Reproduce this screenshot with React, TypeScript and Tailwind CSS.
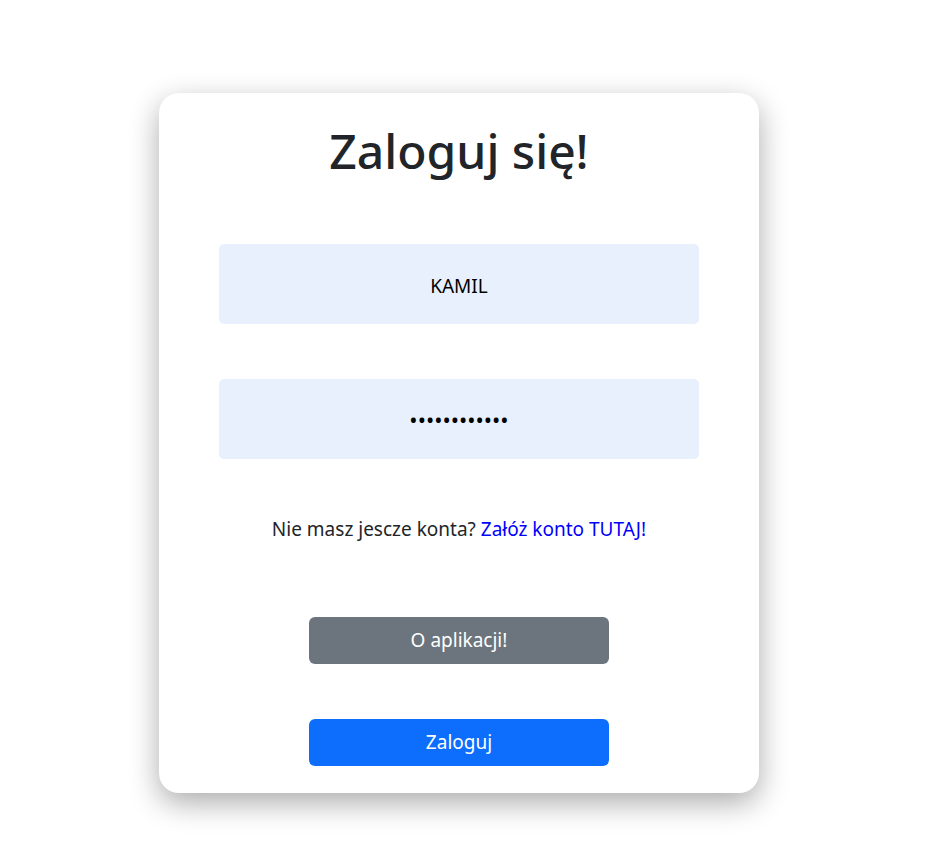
import React from "react";

export default function App() {
  return (
    <div
      className="min-h-[856px] bg-white flex justify-center pr-[16px] pt-[93px]"
      style={{ fontFamily: '"Noto Sans", "Open Sans", sans-serif' }}
    >
      <div className="w-[600px] h-[700px] bg-white rounded-[20px] shadow-[0_10px_30px_rgba(0,0,0,0.33)] flex flex-col items-center">
        <h1 className="mt-[28px] text-[48px] leading-[60px] font-medium text-[#212529]">
          Zaloguj się!
        </h1>
        <div className="mt-[63px] w-[480px] h-[80px] pt-[4px] bg-[#e8f0fe] rounded-[5px] flex items-center justify-center text-[19px] text-black">
          KAMIL
        </div>
        <div className="mt-[55px] w-[480px] h-[80px] bg-[#e8f0fe] rounded-[5px] flex items-center justify-center text-[22px] text-black">
          ••••••••••••
        </div>
        <p className="mt-[56px] text-[19px] leading-[28px] text-[#212529]">
          Nie masz jescze konta? <span className="text-[#0000ff]">Załóż konto TUTAJ!</span>
        </p>
        <button className="mt-[74px] w-[300px] h-[47px] bg-[#6c757d] rounded-[6px] text-white text-[19px]">
          O aplikacji!
        </button>
        <button className="mt-[55px] w-[300px] h-[47px] bg-[#0d6efd] rounded-[6px] text-white text-[19px]">
          Zaloguj
        </button>
      </div>
    </div>
  );
}
